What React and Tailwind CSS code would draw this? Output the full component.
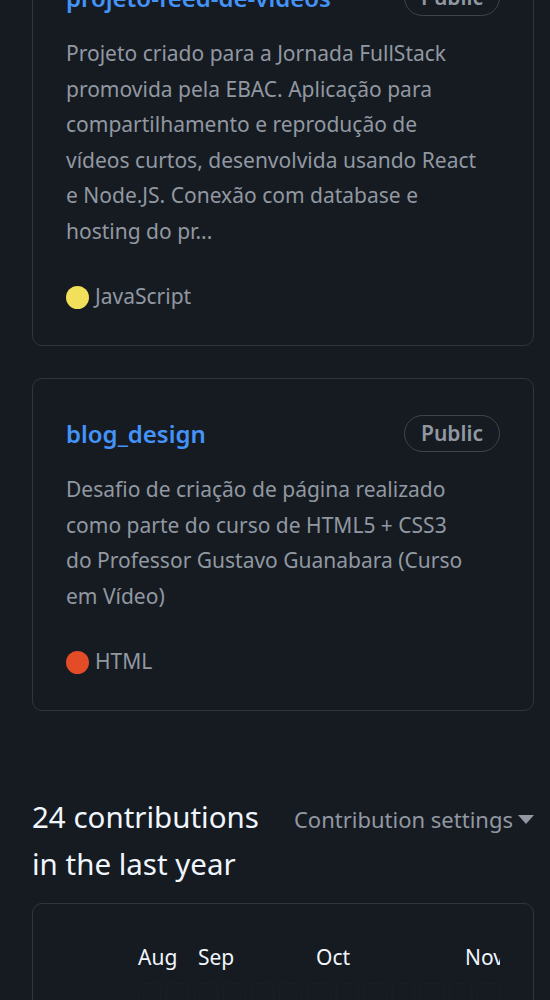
const repos = [
  {
    name: "projeto-feed-de-videos",
    desc: [
      "Projeto criado para a Jornada FullStack",
      "promovida pela EBAC. Aplicação para",
      "compartilhamento e reprodução de",
      "vídeos curtos, desenvolvida usando React",
      "e Node.JS. Conexão com database e",
      "hosting do pr...",
    ],
    lang: "JavaScript",
    color: "bg-[#f1e05a]",
  },
  {
    name: "blog_design",
    desc: [
      "Desafio de criação de página realizado",
      "como parte do curso de HTML5 + CSS3",
      "do Professor Gustavo Guanabara (Curso",
      "em Vídeo)",
    ],
    lang: "HTML",
    color: "bg-[#e34c26]",
  },
];

const months = [
  { label: "Aug", left: 72 },
  { label: "Sep", left: 132 },
  { label: "Oct", left: 250 },
  { label: "Nov", left: 399 },
];

function RepoCard({ repo }) {
  return (
    <div className="rounded-[10px] border border-[#30363d] pl-[33px] pr-[33px] pt-[36px] pb-[30px]">
      <div className="flex h-[37px] items-center justify-between">
        <a className="text-[24px] font-semibold leading-none text-[#4493f8]">{repo.name}</a>
        <span className="flex h-[37px] w-[96px] items-center justify-center rounded-full border border-[#3d444d] text-[21px] font-semibold text-[#9198a1]">
          Public
        </span>
      </div>
      <p className="mt-[20px] text-[21px] leading-[35.5px] text-[#9198a1]">
        {repo.desc.map((line) => (
          <span key={line} className="block whitespace-nowrap">
            {line}
          </span>
        ))}
      </p>
      <div className="mt-[30px] flex h-[36px] items-center gap-[6px] text-[21px] text-[#9198a1]">
        <span className={`h-[23px] w-[23px] rounded-full ${repo.color}`} />
        <span>{repo.lang}</span>
      </div>
    </div>
  );
}

export default function App() {
  return (
    <div
      className="h-[1000px] w-full overflow-hidden bg-[#161b22] pl-[32px] pr-[16px]"
      style={{ fontFamily: '"Noto Sans", "Open Sans", sans-serif' }}
    >
      <div className="-mt-[58px] flex flex-col gap-[32px]">
        {repos.map((r) => (
          <RepoCard key={r.name} repo={r} />
        ))}
      </div>

      <div className="mt-[82px] flex items-start justify-between">
        <h2 className="w-[250px] text-[29.5px] leading-[47px] text-[#f0f6fc]">24 contributions in the last year</h2>
        <button className="mt-[11px] flex items-center gap-[5px] text-[22px] leading-[30px] text-[#9198a1]">
          Contribution settings
          <svg width="16" height="10" viewBox="0 0 16 10" className="mt-[2px]">
            <path d="M0 0h16L8 9z" fill="#9198a1" />
          </svg>
        </button>
      </div>

      <div className="mt-[16px] h-[200px] rounded-[10px] border border-[#30363d] px-[33px] pt-[35px]">
        <div className="relative h-[36px] overflow-hidden">
          {months.map((m) => (
            <span
              key={m.label}
              className="absolute top-0 text-[21px] leading-[36px] text-[#f0f6fc]"
              style={{ left: m.left }}
            >
              {m.label}
            </span>
          ))}
        </div>
        <div className="mt-[8px] flex gap-[5px] pl-[72px]">
          {Array.from({ length: 13 }).map((_, i) => (
            <span key={i} className="h-[24px] w-[24px] rounded-[4px] border border-[#191e25] bg-[#161b22]" />
          ))}
        </div>
      </div>
    </div>
  );
}
